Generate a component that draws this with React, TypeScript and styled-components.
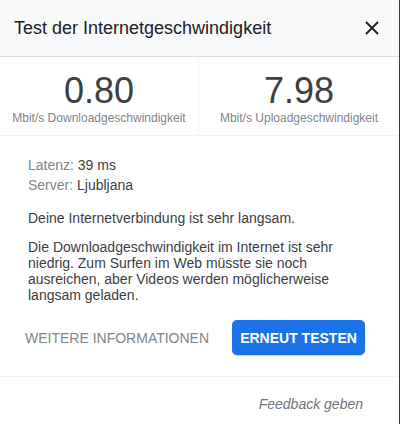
import React from "react";
import styled, { createGlobalStyle } from "styled-components";

const Global = createGlobalStyle`
  html, body { margin: 0; padding: 0; background: #fff; }
  body { font-family: "Liberation Sans", Arial, sans-serif; }
`;

const Panel = styled.div`
  width: 399px;
  height: 424px;
  border-right: 1px solid #3a3a3a;
  background: #fff;
  display: flex;
  flex-direction: column;
`;

const Header = styled.div`
  height: 56px;
  background: #f8f9fa;
  border-bottom: 1px solid #dadce0;
  display: flex;
  align-items: center;
  justify-content: space-between;
  padding: 0 18px 0 14px;
`;

const Title = styled.div`
  font-size: 18px;
  color: #202124;
  padding-top: 1px;
`;

const Close = styled.button`
  border: 0;
  background: none;
  padding: 0;
  width: 18px;
  height: 18px;
  display: flex;
  align-items: center;
  justify-content: center;
  cursor: pointer;
`;

const Stats = styled.div`
  display: grid;
  grid-template-columns: 199px 1fr;
  height: 78px;
  border-bottom: 1px solid #f1f3f4;
`;

const Stat = styled.div<{ $divider?: boolean }>`
  display: flex;
  flex-direction: column;
  align-items: center;
  padding-top: 15px;
  border-right: ${(p) => (p.$divider ? "1px solid #f1f3f4" : "none")};
`;

const Value = styled.div`
  font-size: 36px;
  line-height: 38px;
  color: #3c4043;
`;

const Unit = styled.div`
  font-size: 12px;
  color: #80868b;
  margin-top: 1px;
`;

const Body = styled.div`
  padding: 19px 28px 0 28px;
  font-size: 14px;
  color: #3c4043;
`;

const Info = styled.div`
  line-height: 20px;
`;

const Label = styled.span`
  color: #80868b;
`;

const Para = styled.p<{ $gap: number }>`
  margin: 0;
  line-height: 16px;
  margin-top: ${(p) => p.$gap}px;
`;

const Actions = styled.div`
  display: flex;
  align-items: center;
  justify-content: space-between;
  padding: 17px 34px 21px 25px;
  border-bottom: 1px solid #f1f3f4;
`;

const TextButton = styled.button`
  border: 0;
  background: none;
  padding: 0;
  font-family: inherit;
  font-size: 14px;
  color: #80868b;
`;

const PrimaryButton = styled.button`
  border: 0;
  background: #1a73e8;
  color: #fff;
  font-family: inherit;
  font-size: 14px;
  font-weight: bold;
  height: 35px;
  padding: 0;
  width: 133px;
  border-radius: 5px;
  box-shadow: 0 1px 1px rgba(60, 64, 67, 0.25);
`;

const Footer = styled.div`
  display: flex;
  justify-content: flex-end;
  padding: 19px 36px 0 0;
`;

const Feedback = styled.span`
  font-style: italic;
  font-size: 14px;
  color: #70757a;
`;

export default function App() {
  return (
    <>
      <Global />
      <Panel>
        <Header>
          <Title>Test der Internetgeschwindigkeit</Title>
          <Close aria-label="Schließen">
            <svg width="14" height="14" viewBox="0 0 14 14">
              <path d="M1 1 L13 13 M13 1 L1 13" stroke="#202124" strokeWidth="1.9" />
            </svg>
          </Close>
        </Header>
        <Stats>
          <Stat $divider>
            <Value>0.80</Value>
            <Unit>Mbit/s Downloadgeschwindigkeit</Unit>
          </Stat>
          <Stat>
            <Value>7.98</Value>
            <Unit>Mbit/s Uploadgeschwindigkeit</Unit>
          </Stat>
        </Stats>
        <Body>
          <Info>
            <Label>Latenz:</Label> 39 ms
          </Info>
          <Info>
            <Label>Server:</Label> Ljubljana
          </Info>
          <Para $gap={15}>Deine Internetverbindung ist sehr langsam.</Para>
          <Para $gap={13}>
            Die Downloadgeschwindigkeit im Internet ist sehr niedrig. Zum Surfen im Web müsste sie noch
            ausreichen, aber Videos werden möglicherweise langsam geladen.
          </Para>
        </Body>
        <Actions>
          <TextButton>WEITERE INFORMATIONEN</TextButton>
          <PrimaryButton>ERNEUT TESTEN</PrimaryButton>
        </Actions>
        <Footer>
          <Feedback>Feedback geben</Feedback>
        </Footer>
      </Panel>
    </>
  );
}
